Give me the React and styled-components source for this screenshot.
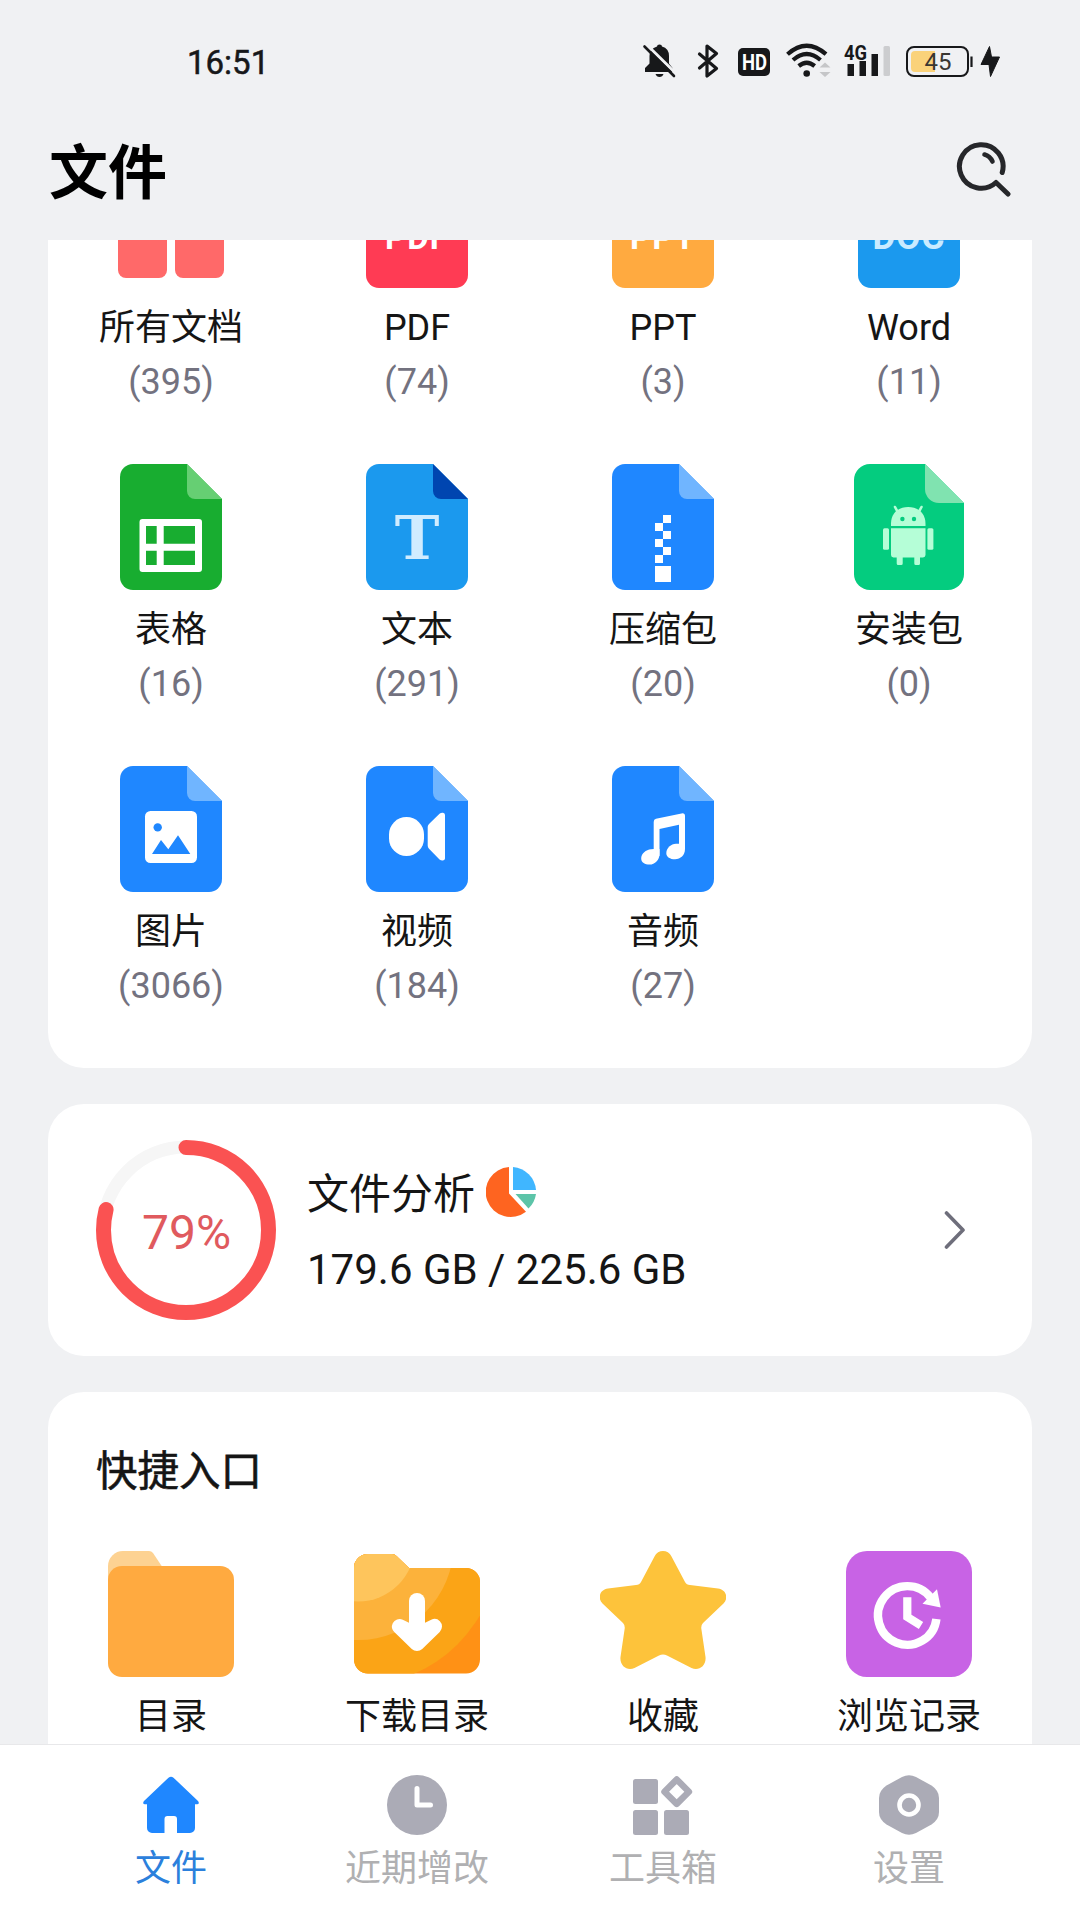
import styled, { createGlobalStyle } from "styled-components";

const GlobalStyle = createGlobalStyle`
    * {
        box-sizing: border-box;
    }

    body {
        margin: 0;
        background: #f0f1f3;
        font-family: Roboto, "Noto Sans CJK SC", sans-serif;
    }
`;

const Screen = styled.div`
    display: flex;
    flex-direction: column;
    width: 1080px;
    height: 1920px;
    overflow: hidden;
    background: #f0f1f3;
`;

const StatusBar = styled.div`
    display: flex;
    align-items: center;
    justify-content: space-between;
    height: 122px;
    padding: 0 80px 0 187px;
`;

const Time = styled.span`
    margin-top: 3px;
    font-size: 33px;
    line-height: 40px;
    color: #17181a;
    -webkit-text-stroke: 0.5px #17181a;
`;

const StatusIcons = styled.div`
    display: flex;
`;

const StatusIcon = styled.svg`
    display: block;
    height: 36px;
    overflow: visible;
    margin-left: ${({ $gap }) => $gap || 0}px;
`;

const Header = styled.header`
    display: flex;
    align-items: center;
    justify-content: space-between;
    height: 118px;
    padding: 0 66px 22px 49px;
`;

const Title = styled.h1`
    margin: 8px 0 0;
    font-size: 59px;
    font-weight: 700;
    line-height: 80px;
    color: #000;
`;

const Content = styled.main`
    flex: 1;
    min-height: 0;
    overflow: hidden;
    padding: 0 48px;
`;

const Card = styled.section`
    border-radius: 36px;
    background: #fff;
    margin-bottom: 36px;
`;

/* the list is scrolled, its first row starts above the visible area */
const TypesCard = styled(Card)`
    display: grid;
    grid-template-columns: repeat(4, 1fr);
    grid-auto-rows: 302px;
    margin-top: -78px;
`;

const Cell = styled.div`
    display: flex;
    flex-direction: column;
    align-items: center;
`;

const CellIcon = styled.svg`
    display: block;
    width: 126px;
    height: 126px;
`;

const Label = styled.span`
    margin-top: 13px;
    font-size: 36px;
    line-height: 54px;
    color: #151515;
    white-space: nowrap;
`;

const Count = styled.span`
    font-size: 36px;
    line-height: 55px;
    color: #73727f;
`;

const AnalysisCard = styled(Card)`
    display: flex;
    align-items: center;
    height: 252px;
    padding: 0 66px 0 48px;
`;

const Ring = styled.svg`
    display: block;
    width: 180px;
    height: 180px;
`;

const AnalysisInfo = styled.div`
    flex: 1;
    margin: 5px 0 0 31px;
`;

const AnalysisTitle = styled.div`
    display: flex;
    align-items: center;
    gap: 11px;
    font-size: 42px;
    line-height: 60px;
    color: #151515;

    svg {
        margin-top: -6px;
    }
`;

const AnalysisSize = styled.div`
    margin-top: 15px;
    font-size: 42px;
    line-height: 60px;
    color: #151515;
`;

const ShortcutsCard = styled(Card)`
    padding: 50px 0 40px;
`;

const SectionTitle = styled.h2`
    margin: 0 0 49px 48px;
    font-size: 41.500px;
    font-weight: 400;
    line-height: 60px;
    color: #151515;
    -webkit-text-stroke: 0.6px #151515;
`;

const ShortcutGrid = styled.div`
    display: grid;
    grid-template-columns: repeat(4, 1fr);
`;

const TabBar = styled.nav`
    display: grid;
    grid-template-columns: repeat(4, 1fr);
    height: 176px;
    padding: 30px 48px 0;
    border-top: 1px solid #e8e8ea;
    background: #fff;
`;

const Tab = styled.div`
    display: flex;
    flex-direction: column;
    align-items: center;
    gap: 7px;
    font-size: 36px;
    line-height: 54px;
    color: ${({ $active }) => ($active ? "#2b80dc" : "#b0b0b2")};
`;

const TabIcon = styled.svg`
    display: block;
    width: 60px;
    height: 60px;
    fill: ${({ $active }) => ($active ? "#1f87ff" : "#ababb6")};
`;

function Page({ color, fold, children }) {
    return (
        <CellIcon viewBox="0 0 126 126">
            <path d="M25 0H79L114 35V113A13 13 0 0 1 101 126H25A13 13 0 0 1 12 113V13A13 13 0 0 1 25 0Z" fill={color} />
            <path d="M79 0V27A8 8 0 0 0 87 35H114Z" fill={fold} />
            {children}
        </CellIcon>
    );
}

function NamedPage({ color, fold, text, textColor, size }) {
    return (
        <Page color={color} fold={fold}>
            <text x="63" y="87" textAnchor="middle" fontFamily="Roboto, sans-serif" fontWeight="700" fontSize={size} letterSpacing="1" fill={textColor}>
                {text}
            </text>
        </Page>
    );
}

const AllIcon = () => (
    <CellIcon viewBox="0 0 126 126" fill="#ff6969">
        <rect x="10" y="10" width="49" height="49" rx="8" />
        <rect x="67" y="10" width="49" height="49" rx="8" />
        <rect x="10" y="67" width="49" height="49" rx="8" />
        <rect x="67" y="67" width="49" height="49" rx="8" />
    </CellIcon>
);

const PdfIcon = () => <NamedPage color="#ff3b54" fold="#ff8a98" text="PDF" textColor="#fff" size={33} />;
const PptIcon = () => <NamedPage color="#ffaa40" fold="#ffd08f" text="PPT" textColor="#fff" size={33} />;
const DocIcon = () => <NamedPage color="#1b99ee" fold="#0045b0" text="DOC" textColor="#c9ebff" size={35} />;

const SheetIcon = () => (
    <Page color="#18ad30" fold="#66cf73">
        <path
            fill="#fff"
            fillRule="evenodd"
            d="M34.500 55H91A3 3 0 0 1 94 58V105A3 3 0 0 1 91 108H34.500A3 3 0 0 1 31.500 105V58A3 3 0 0 1 34.500 55ZM38 62V79.700H48.700V62ZM55.700 62V79.700H87V62ZM38 86.700V101H48.700V86.700ZM55.700 86.700V101H87V86.700Z"
        />
    </Page>
);

const TextIcon = () => (
    <Page color="#1b99ee" fold="#0045b0">
        <text x="63" y="94.700" textAnchor="middle" fontFamily="DejaVu Serif, serif" fontWeight="700" fontSize="60" fill="#d0ecff">
            T
        </text>
    </Page>
);

const ZipIcon = () => (
    <Page color="#1f87ff" fold="#70b5ff">
        <path fill="#fff" d="M63 51h8v8h-8zM55 59h8v8h-8zM63 67h8v8h-8zM55 75h8v8h-8zM63 83h8v8h-8zM55 91h8v8h-8zM55 102h16v16h-16z" />
    </Page>
);

const ApkIcon = () => (
    <CellIcon viewBox="0 0 126 126">
        <path d="M24 0H79L118 39V110A16 16 0 0 1 102 126H24A16 16 0 0 1 8 110V16A16 16 0 0 1 24 0Z" fill="#04cc7f" />
        <path d="M79 0V25A14 14 0 0 0 93 39H118Z" fill="#80e3b0" />
        <g fill="#b5fed7">
            <path d="M45 62V59.500C45 49.500 52 43 62.200 43S79.500 49.500 79.500 59.500V62Z" />
            <path d="M45 64.300H79.500V91A2.500 2.500 0 0 1 77 93.400H74V99.500A1.500 1.500 0 0 1 72.500 101H69.800A1.500 1.500 0 0 1 68.300 99.500V93.400H56.700V99.500A1.500 1.500 0 0 1 55.200 101H52.200A1.500 1.500 0 0 1 50.700 99.500V93.400H47.500A2.500 2.500 0 0 1 45 91Z" />
            <rect x="37" y="64.300" width="6" height="21.500" rx="1.500" />
            <rect x="81.400" y="64.300" width="6" height="21.500" rx="1.500" />
        </g>
        <path d="M49 43L52 48.500M75.500 43L72.500 48.500" stroke="#b5fed7" strokeWidth="2.600" strokeLinecap="round" />
        <circle cx="56.400" cy="55" r="2.200" fill="#04cc7f" />
        <circle cx="68" cy="55" r="2.200" fill="#04cc7f" />
    </CellIcon>
);

const ImageIcon = () => (
    <Page color="#1f87ff" fold="#70b5ff">
        <rect x="37" y="45" width="52" height="52" rx="5.500" fill="#fff" />
        <circle cx="49.700" cy="61.400" r="4.200" fill="#1f87ff" />
        <path d="M44 88L53 74L60.300 83.300L70 69.300L82.300 88Z" fill="#1f87ff" />
    </Page>
);

const VideoIcon = () => (
    <Page color="#1f87ff" fold="#70b5ff">
        <rect x="35" y="51" width="35" height="39" rx="17.500" fill="#fff" />
        <path d="M73.700 61Q73.700 59.500 75 58L85.500 47.800Q87 46.600 89 46.800Q91 47 91 49V92.500Q91 94.300 89 94.400Q87 94.600 85.500 93.400L75 82.800Q73.700 81.500 73.700 79.500Z" fill="#fff" />
    </Page>
);

const AudioIcon = () => (
    <Page color="#1f87ff" fold="#70b5ff">
        <path fill="#fff" d="M53.700 56Q53.700 53.400 56 52.800L81.500 47.400Q85 46.800 85 50V83H79V58.700L59.500 63V90H53.700Z" />
        <path fill="#fff" d="M59.500 83V88C59.500 94 55 98.600 49.500 98.600C45 98.600 41.200 96.500 41.200 92.500C41.200 87.500 46 83.500 51 83.200L54 83Z" />
        <path fill="#fff" d="M85 78V83C85 89 80.500 93.300 75 93.300C70 93.300 66.300 91 66.300 87C66.300 82 71 78 76 77.800L79.500 77.700Z" />
    </Page>
);

const FolderIcon = () => (
    <CellIcon viewBox="0 0 126 126">
        <path d="M0 27V15A15 15 0 0 1 15 0H41Q43.500 0 45 2L55 17V40H0Z" fill="#fdd292" />
        <rect x="0" y="15" width="126" height="111" rx="14" fill="#ffaa40" />
    </CellIcon>
);

const DownloadIcon = () => (
    <CellIcon viewBox="0 0 126 126">
        <clipPath id="download-folder">
            <path d="M14 3H38Q40.500 3 42.500 5L55 17H112A14 14 0 0 1 126 31V108.500A14 14 0 0 1 112 122.500H14A14 14 0 0 1 0 108.500V17A14 14 0 0 1 14 3Z" />
        </clipPath>
        <g clipPath="url(#download-folder)">
            <rect width="126" height="126" fill="#ff9115" />
            <circle cx="4" cy="-6.500" r="141" fill="#fba416" />
            <circle cx="4" cy="-6.500" r="95.600" fill="#fcb23b" />
            <circle cx="4" cy="-6.500" r="57" fill="#fec55c" />
        </g>
        <path d="M63 50V86" stroke="#fff" strokeWidth="16" strokeLinecap="round" />
        <path d="M45.500 75.500L63 92.500L80.500 75.500L63 84Z" fill="#fff" stroke="#fff" strokeWidth="15" strokeLinejoin="round" />
    </CellIcon>
);

const StarIcon = () => (
    <CellIcon viewBox="0 0 126 126">
        <path
            fill="#fdc33b"
            d="M54.500 5.500C58 -1.800 68 -1.800 71.500 5.500L85 31Q86.500 34 90 34L118 37.500C126 38.500 129 47 123.500 52.500L103 72Q101 74 101.300 77.500L105.500 106C106.500 115 98.500 120.500 91.500 117L67 104.500Q63 102.500 59 104.500L34.500 117C27.500 120.500 19.500 115 20.500 106L24.700 77.500Q25 74 23 72L2.500 52.500C-3 47 0 38.500 8 37.500L36 34Q39.500 34 41 31Z"
        />
    </CellIcon>
);

const HistoryIcon = () => (
    <CellIcon viewBox="0 0 126 126" fill="none">
        <rect width="126" height="126" rx="21" fill="#c863e5" />
        <path d="M90.400 67.900A29.300 29.300 0 1 1 84.500 46.500" stroke="#fff" strokeWidth="8.400" />
        <path d="M91 38.300L94.700 56.500L76.500 52.700Z" fill="#fff" />
        <path d="M61.300 46.300V66L75 74.500" stroke="#fff" strokeWidth="8.200" />
    </CellIcon>
);

function PieIcon() {
    return (
        <svg width="50" height="50" viewBox="0 0 50 50">
            <path d="M23 0A25 25 0 1 0 40 44.700L23 26.500Z" fill="#fe6420" />
            <path d="M27 0A25 25 0 0 1 50 23H27Z" fill="#40b6ff" />
            <path d="M50 27A25 25 0 0 1 42.500 41.500L29.500 27Z" fill="#5cc4a8" />
        </svg>
    );
}

function UsageRing({ percent }) {
    return (
        <Ring viewBox="0 0 180 180" fill="none">
            <circle cx="90" cy="90" r="83" stroke="#f6f6f6" strokeWidth="13" />
            <circle
                cx="90"
                cy="90"
                r="82.500"
                stroke="#fa5252"
                strokeWidth="15"
                strokeLinecap="round"
                pathLength="100"
                strokeDasharray={`${percent} 100`}
                transform="rotate(-90 90 90)"
            />
            <text x="90.500" y="109" textAnchor="middle" fontSize="48" fill="#e05a5e">
                {percent}%
            </text>
        </Ring>
    );
}

const types = [
    { name: "所有文档", count: 395, Icon: AllIcon },
    { name: "PDF", count: 74, Icon: PdfIcon },
    { name: "PPT", count: 3, Icon: PptIcon },
    { name: "Word", count: 11, Icon: DocIcon },
    { name: "表格", count: 16, Icon: SheetIcon },
    { name: "文本", count: 291, Icon: TextIcon },
    { name: "压缩包", count: 20, Icon: ZipIcon },
    { name: "安装包", count: 0, Icon: ApkIcon },
    { name: "图片", count: 3066, Icon: ImageIcon },
    { name: "视频", count: 184, Icon: VideoIcon },
    { name: "音频", count: 27, Icon: AudioIcon },
];

const shortcuts = [
    { name: "目录", Icon: FolderIcon },
    { name: "下载目录", Icon: DownloadIcon },
    { name: "收藏", Icon: StarIcon },
    { name: "浏览记录", Icon: HistoryIcon },
];

const tabs = [
    {
        name: "文件",
        active: true,
        drawing: (
            <path d="M27.500 2.700Q30 .6 32.500 2.700L57 26Q59 29 56 29.300H54V53A5 5 0 0 1 49 58H36V44A3 3 0 0 0 33 41H26.500A3 3 0 0 0 23.500 44V58H11A5 5 0 0 1 6 53V29.300H4Q1 29 3 26Z" />
        ),
    },
    {
        name: "近期增改",
        drawing: (
            <>
                <circle cx="30" cy="30" r="30" />
                <path d="M30 13.500V30H43.500" fill="none" stroke="#fff" strokeWidth="5" strokeLinecap="round" strokeLinejoin="round" />
            </>
        ),
    },
    {
        name: "工具箱",
        drawing: (
            <>
                <rect x="0" y="4" width="25" height="25" rx="2.500" />
                <rect x="0" y="35" width="25" height="25" rx="2.500" />
                <rect x="31" y="35" width="25" height="25" rx="2.500" />
                <path d="M43.700 4.500L55.900 16.700L43.700 28.900L31.500 16.700Z" fill="none" stroke="#ababb6" strokeWidth="6.500" strokeLinejoin="round" />
            </>
        ),
    },
    {
        name: "设置",
        drawing: (
            <>
                <path d="M23 2Q30 -1.600 37 2L52.500 10.500Q60 15.500 60 23V37Q60 44.500 52.500 49.500L37 58Q30 61.600 23 58L7.500 49.500Q0 44.500 0 37V23Q0 15.500 7.500 10.500Z" />
                <circle cx="30" cy="30" r="9.500" fill="none" stroke="#fff" strokeWidth="4.600" />
            </>
        ),
    },
];

function Status() {
    return (
        <StatusBar>
            <Time>16:51</Time>
            <StatusIcons>
                <StatusIcon width="33" viewBox="0 0 33 36">
                    <path d="M14 3.500Q14 1.500 16.500 1.500T19 3.500Q26 5.500 26 13V20.500L29.500 25V29H2V25L6.500 20.500V13Q6.500 6 14 3.500Z" fill="#17181a" />
                    <path d="M12.500 31H20.500Q19.500 34 16.500 34T12.500 31Z" fill="#17181a" />
                    <path d="M3 1L33 30.500" stroke="#f0f1f3" strokeWidth="3" />
                    <path d="M1.500 3.500L31 33" stroke="#17181a" strokeWidth="2.600" strokeLinecap="round" />
                </StatusIcon>
                <StatusIcon $gap={21} width="22" viewBox="0 0 22 36" fill="none" stroke="#17181a" strokeWidth="3.200" strokeLinejoin="round" strokeLinecap="round">
                    <path d="M2.500 11L19.500 25.500L10 33V3L19.500 10.500L2.500 25" />
                </StatusIcon>
                <StatusIcon $gap={19} width="32" viewBox="0 0 32 36">
                    <rect y="5" width="32" height="28" rx="5" fill="#17181a" />
                    <text x="16.500" y="27" textAnchor="middle" fontSize="22.500" fontWeight="700" textLength="25" lengthAdjust="spacingAndGlyphs" fill="#fff">
                        HD
                    </text>
                </StatusIcon>
                <StatusIcon $gap={16} width="45" viewBox="0 0 45 36" fill="none">
                    <path d="M1.500 11.200Q20.700 -5.800 40 11.200M7 17Q20.700 5 34.500 17M12.700 23Q20.700 16.500 28.700 23" stroke="#17181a" strokeWidth="4.200" />
                    <circle cx="20.700" cy="30.500" r="3.300" fill="#17181a" />
                    <path d="M33.500 24.500L39 19.500L44.500 24.500ZM33.500 29L39 34L44.500 29Z" fill="#c5c6c8" />
                </StatusIcon>
                <StatusIcon $gap={13} width="46" viewBox="0 0 46 36">
                    <path d="M3.500 21H10V33H3.500ZM15.500 18H22V33H15.500ZM27.500 11H34V33H27.500Z" fill="#17181a" />
                    <rect x="39.500" y="3" width="6.500" height="30" rx="1.500" fill="#cccdcf" />
                    <text x="0" y="16.500" fontSize="20.500" fontWeight="700" textLength="23" lengthAdjust="spacingAndGlyphs" fill="#17181a">
                        4G
                    </text>
                </StatusIcon>
                <StatusIcon $gap={16} width="67" viewBox="0 0 67 36">
                    <rect x="1" y="4" width="61" height="29" rx="7" fill="none" stroke="#17181a" strokeWidth="2" />
                    <path d="M9 8H29V29H9A4 4 0 0 1 5 25V12A4 4 0 0 1 9 8Z" fill="#fad27a" />
                    <path d="M65.500 13.500V24" stroke="#17181a" strokeWidth="2.200" />
                    <text x="32" y="27" textAnchor="middle" fontSize="24" fill="#3a3732">
                        45
                    </text>
                </StatusIcon>
                <StatusIcon $gap={7} width="20" viewBox="0 0 20 36">
                    <path d="M9.500 3.500L1 21.500H9L10.500 33.500L19.500 14H11.500Z" fill="#17181a" stroke="#17181a" strokeLinejoin="round" />
                </StatusIcon>
            </StatusIcons>
        </StatusBar>
    );
}

function App() {
    return (
        <Screen>
            <GlobalStyle />
            <Status />
            <Header>
                <Title>文件</Title>
                <svg width="58" height="56" viewBox="0 0 58 56" fill="none" stroke="#26272a" strokeWidth="5" strokeLinecap="round" strokeLinejoin="round">
                    <path d="M46.200 30.500A21.800 21.800 0 1 0 40 40.500L52 52" />
                    <path d="M28.500 12.500Q34 14 36.500 19.500" strokeWidth="4.600" />
                </svg>
            </Header>
            <Content>
                <TypesCard>
                    {types.map(({ name, count, Icon }) => (
                        <Cell key={name}>
                            <Icon />
                            <Label>{name}</Label>
                            <Count>({count})</Count>
                        </Cell>
                    ))}
                </TypesCard>
                <AnalysisCard>
                    <UsageRing percent={79} />
                    <AnalysisInfo>
                        <AnalysisTitle>
                            文件分析
                            <PieIcon />
                        </AnalysisTitle>
                        <AnalysisSize>179.6 GB / 225.6 GB</AnalysisSize>
                    </AnalysisInfo>
                    <svg width="22" height="40" viewBox="0 0 22 40" fill="none">
                        <path d="M2.500 3L19 20L2.500 37" stroke="#6e6e7b" strokeWidth="3.600" strokeLinecap="round" strokeLinejoin="round" />
                    </svg>
                </AnalysisCard>
                <ShortcutsCard>
                    <SectionTitle>快捷入口</SectionTitle>
                    <ShortcutGrid>
                        {shortcuts.map(({ name, Icon }) => (
                            <Cell key={name}>
                                <Icon />
                                <Label>{name}</Label>
                            </Cell>
                        ))}
                    </ShortcutGrid>
                </ShortcutsCard>
            </Content>
            <TabBar>
                {tabs.map(({ name, active, drawing }) => (
                    <Tab key={name} $active={active}>
                        <TabIcon $active={active} viewBox="0 0 60 60">{drawing}</TabIcon>
                        {name}
                    </Tab>
                ))}
            </TabBar>
        </Screen>
    );
}

export default App;
